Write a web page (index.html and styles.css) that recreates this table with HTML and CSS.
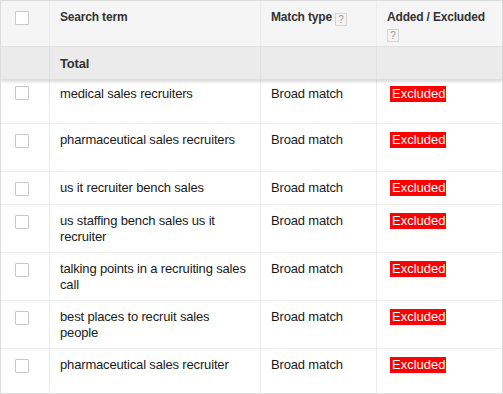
FILE: index.html
```html
<!DOCTYPE html>
<html lang="en">
<head>
<meta charset="utf-8">
<title>Search terms</title>
<link rel="stylesheet" href="styles.css">
</head>
<body>
<div class="terms">
  <div class="row head">
    <div class="cell check"><span class="box"></span></div>
    <div class="cell">Search term</div>
    <div class="cell">Match type <span class="help">?</span></div>
    <div class="cell">Added / Excluded<br><span class="help">?</span></div>
  </div>
  <div class="row total">
    <div class="cell check"></div>
    <div class="cell">Total</div>
    <div class="cell"></div>
    <div class="cell"></div>
  </div>
  <div class="row first">
    <div class="cell check"><span class="box"></span></div>
    <div class="cell">medical sales recruiters</div>
    <div class="cell">Broad match</div>
    <div class="cell"><span class="tag">Excluded</span></div>
  </div>
  <div class="row tall">
    <div class="cell check"><span class="box"></span></div>
    <div class="cell">pharmaceutical sales recruiters</div>
    <div class="cell">Broad match</div>
    <div class="cell"><span class="tag">Excluded</span></div>
  </div>
  <div class="row">
    <div class="cell check"><span class="box"></span></div>
    <div class="cell">us it recruiter bench sales</div>
    <div class="cell">Broad match</div>
    <div class="cell"><span class="tag">Excluded</span></div>
  </div>
  <div class="row tall">
    <div class="cell check"><span class="box"></span></div>
    <div class="cell">us staffing bench sales us it recruiter</div>
    <div class="cell">Broad match</div>
    <div class="cell"><span class="tag">Excluded</span></div>
  </div>
  <div class="row tall">
    <div class="cell check"><span class="box"></span></div>
    <div class="cell">talking points in a recruiting sales call</div>
    <div class="cell">Broad match</div>
    <div class="cell"><span class="tag">Excluded</span></div>
  </div>
  <div class="row tall">
    <div class="cell check"><span class="box"></span></div>
    <div class="cell">best places to recruit sales people</div>
    <div class="cell">Broad match</div>
    <div class="cell"><span class="tag">Excluded</span></div>
  </div>
  <div class="row last">
    <div class="cell check"><span class="box"></span></div>
    <div class="cell">pharmaceutical sales recruiter</div>
    <div class="cell">Broad match</div>
    <div class="cell"><span class="tag">Excluded</span></div>
  </div>
</div>
</body>
</html>
```

FILE: styles.css
```css
html, body {
  margin: 0;
  padding: 0;
  background: #fff;
}

.terms {
  width: 503px;
  height: 394px;
  box-sizing: border-box;
  border: 1px solid #dcdcdc;
  font-family: "Liberation Sans", Arial, Helvetica, sans-serif;
  font-size: 13px;
  line-height: 16px;
  letter-spacing: -0.16px;
  color: #1a1a1a;
  overflow: hidden;
}

.row {
  display: grid;
  grid-template-columns: 48px 211px 116px 1fr;
  border-bottom: 1px solid #ececec;
  box-sizing: border-box;
  height: 33px;
}

.cell {
  box-sizing: border-box;
  padding: 8px 12px 0 10px;
  border-left: 1px solid #ececec;
}

.cell.check {
  border-left: none;
  padding: 10px 0 0 14px;
}

.row.head {
  height: 46px;
  background: #f5f5f5;
  border-bottom: 1px solid #e2e2e2;
  font-size: 12px;
  font-weight: bold;
  letter-spacing: -0.18px;
  color: #333;
}

.row.head .cell {
  padding-top: 8px;
  padding-right: 6px;
}

.row.head .cell.check {
  padding-top: 10px;
}

.row.total {
  height: 33px;
  background: #ebebeb;
  border-bottom: 1px solid #dedede;
  font-weight: bold;
  color: #333;
  position: relative;
  z-index: 1;
  box-shadow: 0 2px 3px rgba(0, 0, 0, 0.14);
}

.row.total .cell {
  border-left-color: #e2e2e2;
  padding-top: 9px;
}

.row.first {
  height: 44px;
}

.row.first .cell {
  padding-top: 6px;
}

.row.first .cell.check {
  padding-top: 6px;
}

.row.tall {
  height: 48px;
}

.row.last {
  height: 47px;
  border-bottom: none;
}

.box {
  display: block;
  width: 12px;
  height: 12px;
  border: 1px solid #c9c9c9;
  border-radius: 1px;
  background: #fff;
}

.help {
  display: inline-block;
  box-sizing: border-box;
  width: 12px;
  height: 13px;
  border: 1px solid #d6d6d6;
  background: #f4f4f4;
  color: #9a9a9a;
  font-size: 10px;
  font-weight: normal;
  letter-spacing: 0;
  line-height: 11px;
  text-align: center;
  vertical-align: -2px;
  margin-top: 2px;
}

.tag {
  display: inline-block;
  background: #ff0000;
  color: #fff;
  padding: 0 1px 0 2px;
  margin-left: 3px;
  line-height: 16px;
  letter-spacing: 0;
}
```
